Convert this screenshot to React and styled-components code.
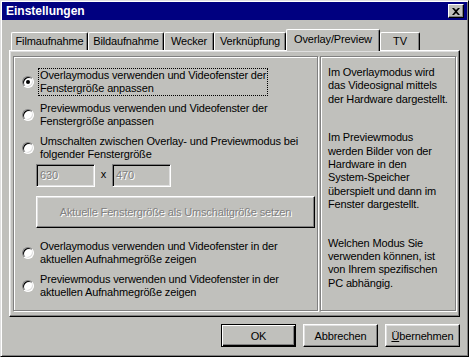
import styled, { createGlobalStyle } from "styled-components";

const GlobalStyle = createGlobalStyle`
  html, body {
    margin: 0;
    padding: 0;
    background: #c0c0c0;
  }
  * {
    box-sizing: border-box;
  }
`;

const face = "#c0c0bc";

const Window = styled.div`
  width: 469px;
  height: 357px;
  display: flex;
  flex-direction: column;
  background: ${face};
  border: 1px solid;
  border-color: #dfdfdf #000 #000 #dfdfdf;
  box-shadow: inset 1px 1px #fff, inset -1px -1px #808080;
  padding: 1px;
  font-family: "Liberation Sans", Arial, sans-serif;
  font-size: 11px;
  letter-spacing: -0.15px;
  white-space: nowrap;
  color: #000;
`;

const TitleBar = styled.div`
  height: 18px;
  background: #000080;
  display: flex;
  align-items: center;
  justify-content: space-between;
  padding: 0 3px 0 4px;
`;

const Title = styled.span`
  color: #fff;
  font-weight: bold;
  font-size: 12px;
  letter-spacing: 0;
`;

const CloseBtn = styled.div`
  width: 16px;
  height: 14px;
  background: ${face};
  border: 1px solid;
  border-color: #fff #000 #000 #fff;
  box-shadow: inset -1px -1px #808080;
  display: flex;
  align-items: center;
  justify-content: center;
`;

const Body = styled.div`
  flex: 1;
  display: flex;
  flex-direction: column;
  padding: 9px 7px 8px 7px;
`;

const TabRow = styled.div`
  height: 21px;
  display: flex;
  align-items: flex-end;
  padding-left: 2px;
  position: relative;
  z-index: 1;
`;

const Tab = styled.div`
  width: ${(p) => p.$w}px;
  height: ${(p) => (p.$active ? 22 : 18)}px;
  margin-bottom: ${(p) => (p.$active ? -1 : 0)}px;
  background: ${face};
  border-top: 1px solid #fff;
  border-left: 1px solid #fff;
  border-right: 1px solid #000;
  border-radius: 2px 2px 0 0;
  box-shadow: inset -1px 0 #808080;
  display: flex;
  align-items: flex-start;
  justify-content: center;
  padding-top: ${(p) => (p.$active ? 3 : 2)}px;
`;

const Panel = styled.div`
  height: 267px;
  border: 1px solid;
  border-color: #fff #000 #000 #fff;
  box-shadow: inset -1px -1px #808080, inset 1px 1px #dfdfdf;
  padding: 5px 3px 5px 3px;
  display: grid;
  grid-template-columns: 305px 136px;
  gap: 2px;
`;

const GroupBox = styled.div`
  border: 1px solid #808080;
  box-shadow: inset 1px 1px #fff, 1px 1px #fff;
`;

const LeftBox = styled(GroupBox)`
  display: flex;
  flex-direction: column;
  padding: 11px 0 0 8px;
`;

const RightBox = styled(GroupBox)`
  padding: 9px 0 0 7px;
`;

const Para = styled.p`
  margin: 0 0 ${(p) => (p.$last ? 0 : 25)}px 0;
  line-height: 13.4px;
`;

const Option = styled.div`
  display: flex;
  align-items: center;
  gap: 4px;
  margin-top: ${(p) => p.$mt || 0}px;
`;

const Radio = styled.div`
  width: 12px;
  height: 12px;
  flex: none;
  border-radius: 50%;
  background: #fff;
  border: 1px solid;
  border-color: #808080 #fff #fff #808080;
  box-shadow: inset 1px 1px #000, inset -1px -1px #dfdfdf;
  display: flex;
  align-items: center;
  justify-content: center;
  &::after {
    content: "";
    display: ${(p) => (p.$checked ? "block" : "none")};
    width: 4px;
    height: 4px;
    border-radius: 50%;
    background: #000;
  }
`;

const Label = styled.div`
  border: 1px dotted ${(p) => (p.$focus ? "#000" : "transparent")};
  padding: 0 1px;
  line-height: 13px;
  width: ${(p) => (p.$w ? `${p.$w}px` : "auto")};
`;

const SizeRow = styled.div`
  display: flex;
  align-items: flex-start;
  margin: 2px 0 0 14px;
`;

const TextBox = styled.div`
  width: 59px;
  height: 23px;
  border: 1px solid;
  border-color: #808080 #fff #fff #808080;
  box-shadow: inset 1px 1px #000, inset -1px -1px #dfdfdf;
  color: #808080;
  text-shadow: 1px 1px #fff;
  padding: 4px 0 0 3px;
`;

const Times = styled.span`
  width: 17px;
  text-align: center;
  padding-top: 4px;
`;

const Button = styled.div`
  width: ${(p) => p.$w}px;
  height: ${(p) => p.$h}px;
  border: 1px solid;
  border-color: #fff #000 #000 #fff;
  box-shadow: inset -1px -1px #808080, inset 1px 1px #dfdfdf;
  display: flex;
  align-items: center;
  justify-content: center;
  color: ${(p) => (p.$disabled ? "#808080" : "#000")};
  text-shadow: ${(p) => (p.$disabled ? "1px 1px #fff" : "none")};
  ${(p) =>
    p.$default &&
    `
    border-color: #000;
    box-shadow: inset 1px 1px #fff, inset -1px -1px #000, inset -2px -2px #808080;
  `}
`;

const WideButton = styled(Button)`
  margin: 9px 0 0 14px;
`;

const ButtonRow = styled.div`
  display: flex;
  justify-content: flex-end;
  gap: 7px;
  margin-top: 7px;
`;

const tabs = [
  ["Filmaufnahme", 77],
  ["Bildaufnahme", 76],
  ["Wecker", 50],
  ["Verknüpfung", 72],
  ["Overlay/Preview", 94, true],
  ["TV", 40],
];

const options = [
  ["Overlaymodus verwenden und Videofenster der", "Fenstergröße anpassen"],
  ["Previewmodus verwenden und Videofenster der", "Fenstergröße anpassen"],
  ["Umschalten zwischen Overlay- und Previewmodus bei", "folgender Fenstergröße"],
  ["Overlaymodus verwenden und Videofenster in der", "aktuellen Aufnahmegröße zeigen"],
  ["Previewmodus verwenden und Videofenster in der", "aktuellen Aufnahmegröße zeigen"],
];

const OptionItem = ({ lines, checked, mt }) => (
  <Option $mt={mt}>
    <Radio $checked={checked} />
    <Label $focus={checked} $w={checked ? 230 : 0}>
      {lines[0]}
      <br />
      {lines[1]}
    </Label>
  </Option>
);

const App = () => {
  return (
    <>
      <GlobalStyle />
      <Window>
        <TitleBar>
          <Title>Einstellungen</Title>
          <CloseBtn>
            <svg width="8" height="7" viewBox="0 0 8 7">
              <path d="M0 0h2l2 2 2-2h2L5 3.5 8 7H6L4 5 2 7H0l3-3.5z" fill="#000" />
            </svg>
          </CloseBtn>
        </TitleBar>
        <Body>
          <TabRow>
            {tabs.map(([name, w, active]) => (
              <Tab key={name} $w={w} $active={active}>
                {name}
              </Tab>
            ))}
          </TabRow>
          <Panel>
            <LeftBox>
              <OptionItem lines={options[0]} checked />
              <OptionItem lines={options[1]} mt={5} />
              <OptionItem lines={options[2]} mt={5} />
              <SizeRow>
                <TextBox>630</TextBox>
                <Times>x</Times>
                <TextBox>470</TextBox>
              </SizeRow>
              <WideButton $w={279} $h={32} $disabled>
                Aktuelle Fenstergröße als Umschaltgröße setzen
              </WideButton>
              <OptionItem lines={options[3]} mt={11} />
              <OptionItem lines={options[4]} mt={5} />
            </LeftBox>
            <RightBox>
              <Para>
                Im Overlaymodus wird
                <br />
                das Videosignal mittels
                <br />
                der Hardware dargestellt.
              </Para>
              <Para>
                Im Previewmodus
                <br />
                werden Bilder von der
                <br />
                Hardware in den
                <br />
                System-Speicher
                <br />
                überspielt und dann im
                <br />
                Fenster dargestellt.
              </Para>
              <Para $last>
                Welchen Modus Sie
                <br />
                verwenden können, ist
                <br />
                von Ihrem spezifischen
                <br />
                PC abhängig.
              </Para>
            </RightBox>
          </Panel>
          <ButtonRow>
            <Button $w={75} $h={23} $default>
              OK
            </Button>
            <Button $w={75} $h={23}>
              Abbrechen
            </Button>
            <Button $w={75} $h={23}>
              <span>
                <u>Ü</u>bernehmen
              </span>
            </Button>
          </ButtonRow>
        </Body>
      </Window>
    </>
  );
};

export default App;
